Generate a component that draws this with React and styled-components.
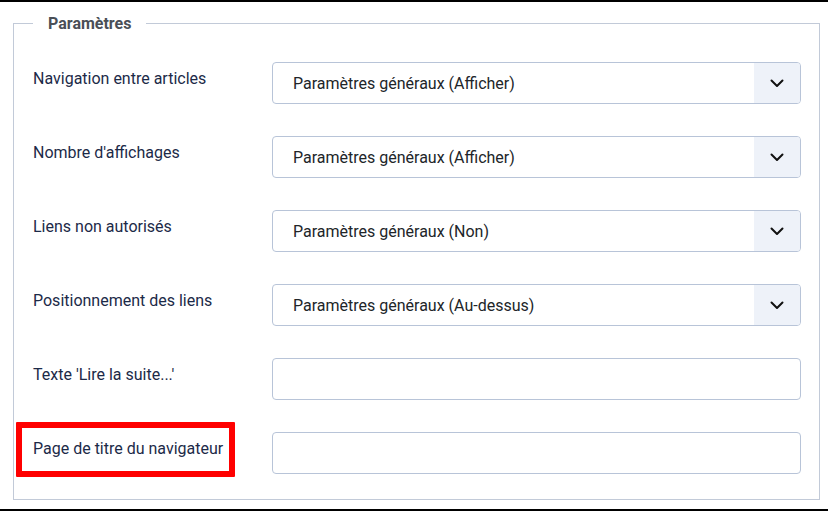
import React from "react";
import styled, { createGlobalStyle } from "styled-components";

const Global = createGlobalStyle`
  html, body { margin: 0; padding: 0; background: #fff; }
  body { font-family: Roboto, "Noto Sans", sans-serif; }
  * { box-sizing: border-box; }
`;

const Frame = styled.div`
  width: 828px;
  height: 511px;
  border-top: 2px solid #000;
  border-bottom: 2px solid #000;
  padding: 12px 9px 0 13px;
  background: #fff;
`;

const Fieldset = styled.fieldset`
  margin: 0;
  width: 807px;
  height: 486px;
  border: 1px solid #c2cad8;
  padding: 29px 18px 0 19px;
  min-width: 0;
`;

const Legend = styled.legend`
  margin-left: 0;
  padding: 0 15px;
  font-size: 16px;
  font-weight: 700;
  color: #4a4f57;
  line-height: 19px;
`;

const Rows = styled.div`
  display: flex;
  flex-direction: column;
  gap: 32px;
`;

const Row = styled.div`
  display: grid;
  grid-template-columns: 239px 1fr;
  align-items: start;
`;

const LabelWrap = styled.div`
  position: relative;
  padding-top: 7px;
`;

const Label = styled.label`
  display: block;
  font-size: 16px;
  line-height: 20px;
  color: #1c2a48;
`;

const Highlight = styled.span`
  position: absolute;
  left: -17px;
  top: -10px;
  width: 219px;
  height: 55px;
  border: 6px solid #ff0000;
  border-radius: 1px;
  pointer-events: none;
`;

const Select = styled.div`
  display: flex;
  height: 42px;
  border: 1px solid #b8c4d8;
  border-radius: 4px;
  overflow: hidden;
  background: #fff;
`;

const SelectText = styled.div`
  flex: 1;
  display: flex;
  align-items: center;
  padding-left: 20px;
  font-size: 16px;
  color: #212529;
`;

const Caret = styled.div`
  width: 46px;
  background: #eef2f9;
  display: flex;
  align-items: center;
  justify-content: center;
`;

const Input = styled.div`
  height: 42px;
  border: 1px solid #b8c4d8;
  border-radius: 4px;
  background: #fff;
`;

const Chevron = () => (
  <svg width="14" height="9" viewBox="0 0 14 9" fill="none">
    <path d="M1.5 1.5 L7 7 L12.5 1.5" stroke="#111" strokeWidth="2" strokeLinecap="round" strokeLinejoin="round" />
  </svg>
);

const rows = [
  { label: "Navigation entre articles", value: "Paramètres généraux (Afficher)" },
  { label: "Nombre d'affichages", value: "Paramètres généraux (Afficher)" },
  { label: "Liens non autorisés", value: "Paramètres généraux (Non)" },
  { label: "Positionnement des liens", value: "Paramètres généraux (Au-dessus)" },
  { label: "Texte 'Lire la suite...'" },
  { label: "Page de titre du navigateur", highlight: true },
];

export default function App() {
  return (
    <>
      <Global />
      <Frame>
        <Fieldset>
          <Legend>Paramètres</Legend>
          <Rows>
            {rows.map((r) => (
              <Row key={r.label}>
                <LabelWrap>
                  <Label>{r.label}</Label>
                  {r.highlight && <Highlight />}
                </LabelWrap>
                {r.value ? (
                  <Select>
                    <SelectText>{r.value}</SelectText>
                    <Caret>
                      <Chevron />
                    </Caret>
                  </Select>
                ) : (
                  <Input />
                )}
              </Row>
            ))}
          </Rows>
        </Fieldset>
      </Frame>
    </>
  );
}
